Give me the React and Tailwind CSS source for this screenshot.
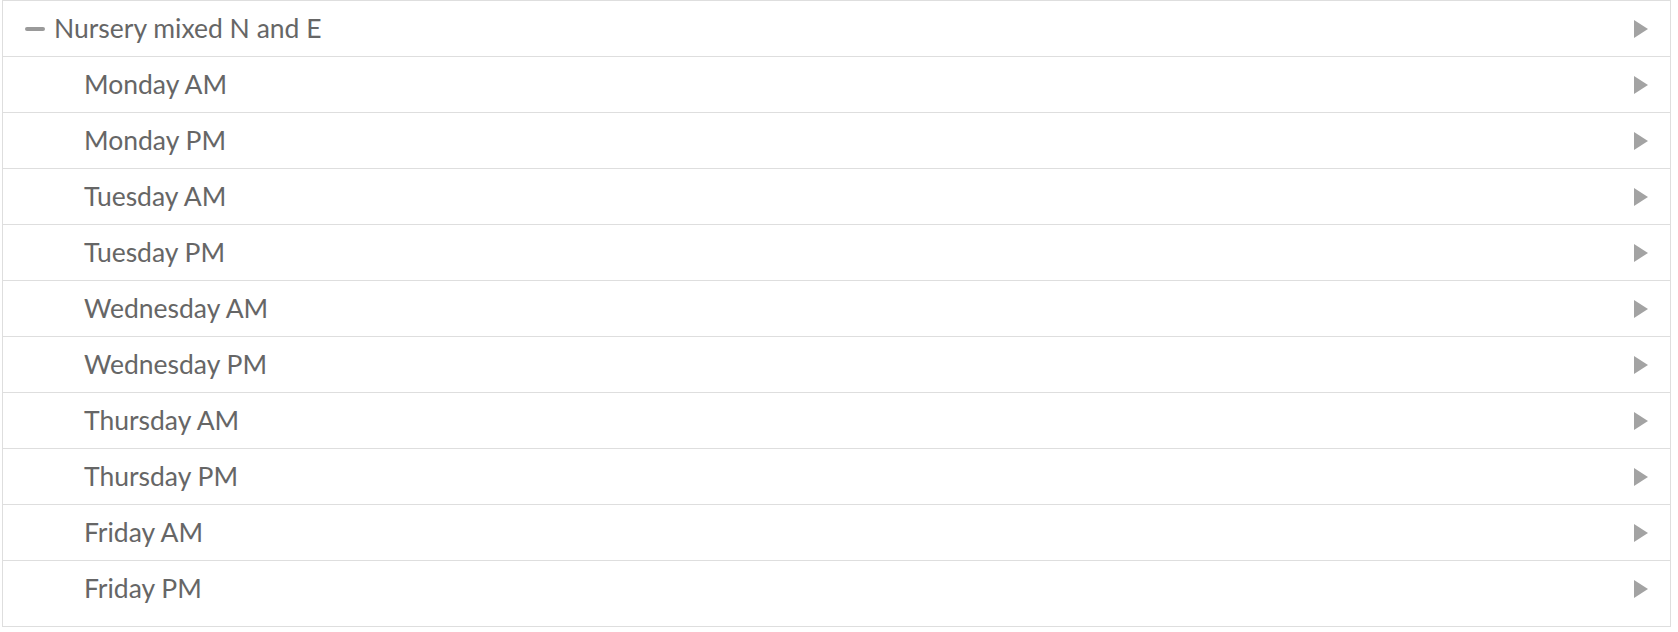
const days = [
  "Monday AM",
  "Monday PM",
  "Tuesday AM",
  "Tuesday PM",
  "Wednesday AM",
  "Wednesday PM",
  "Thursday AM",
  "Thursday PM",
  "Friday AM",
  "Friday PM",
];

const Arrow = () => (
  <svg viewBox="0 0 14 18" className="h-[18px] w-[14px]" fill="#a3a3a3">
    <polygon points="0,0 14,9 0,18" />
  </svg>
);

export default function App() {
  return (
    <div className="min-h-screen bg-white font-['Lato',sans-serif] text-[26.5px] text-[#666]">
      <div className="ml-[2px] w-[1669px] border border-[#dedede] pb-[9px]">
        {/* Group header */}
        <div className="flex h-[56px] items-center border-b border-[#dedede] pl-[22px] pr-[22px]">
          <span className="mr-[9px] block h-[4px] w-[20px] rounded-sm bg-[#9a9a9a]" />
          <span className="flex-1">Nursery mixed N and E</span>
          <Arrow />
        </div>

        {/* Sessions */}
        {days.map((day, i) => (
          <div
            key={day}
            className={`flex h-[56px] items-center pl-[81px] pr-[22px] ${
              i < days.length - 1 ? "border-b border-[#dedede]" : ""
            }`}
          >
            <span className="flex-1">{day}</span>
            <Arrow />
          </div>
        ))}
      </div>
    </div>
  );
}
